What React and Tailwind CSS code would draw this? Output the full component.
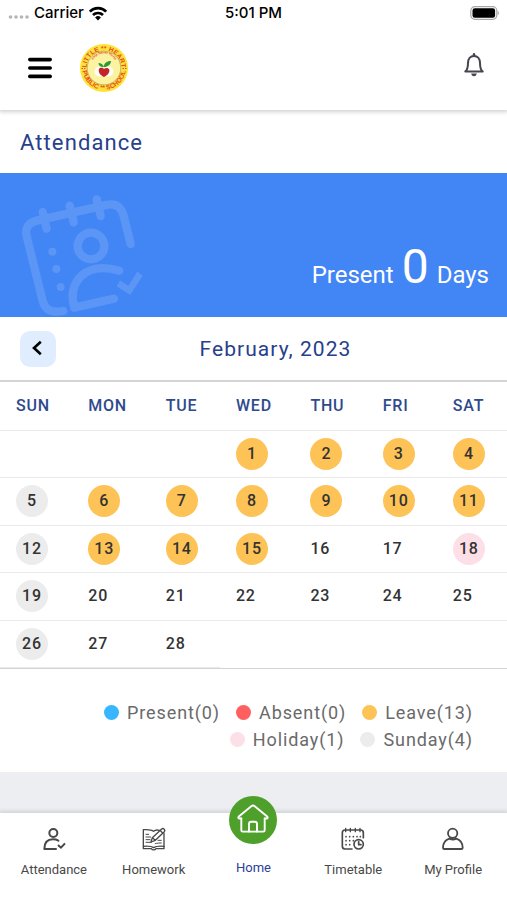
import React, { useState } from 'react';

const weekDays = ['SUN', 'MON', 'TUE', 'WED', 'THU', 'FRI', 'SAT'];

const weeks = [
  [null, null, null, 1, 2, 3, 4],
  [5, 6, 7, 8, 9, 10, 11],
  [12, 13, 14, 15, 16, 17, 18],
  [19, 20, 21, 22, 23, 24, 25],
  [26, 27, 28]
];

const leaveDays = [1, 2, 3, 4, 6, 7, 8, 9, 10, 11, 13, 14, 15];
const holidays = [18];

const legend = [
  { label: 'Present(0)', color: 'bg-[#38b6ff]' },
  { label: 'Absent(0)', color: 'bg-[#ff5f5f]' },
  { label: 'Leave(13)', color: 'bg-[#fec356]' },
  { label: 'Holiday(1)', color: 'bg-[#fddfe7]' },
  { label: 'Sunday(4)', color: 'bg-[#ececec]' }
];

const dayColor = (day, index) => {
  if (!day) return null;
  if (leaveDays.includes(day)) return 'bg-[#fec356]';
  if (holidays.includes(day)) return 'bg-[#fddfe7]';
  if (index === 0) return 'bg-[#ececec]';
  return null;
};

const StatusBar = () => (
  <div className="grid grid-cols-3 items-center h-[26px] px-2 text-[15px] font-medium text-black font-['Inter',sans-serif]">
    <div className="flex items-center gap-1">
      <svg className="w-[22px] h-3" viewBox="0 0 22 12" fill="#b5b5b5">
        <circle cx="2.500" cy="10" r="1.800" />
        <circle cx="8" cy="10" r="1.800" />
        <circle cx="13.500" cy="10" r="1.800" />
        <circle cx="19" cy="10" r="1.800" />
      </svg>
      <span>Carrier</span>
      <svg className="w-5 h-[15px]" viewBox="0 0 20 15" fill="none" stroke="#000" strokeWidth="2.700">
        <path d="M1.800 5.600a11.600 11.600 0 0 1 16.400 0" />
        <path d="M5 9a7.200 7.200 0 0 1 10 0" />
        <path d="M10 14.500 7.100 11.500a4.100 4.100 0 0 1 5.800 0z" fill="#000" stroke="none" />
      </svg>
    </div>
    <span className="text-center">5:01 PM</span>
    <svg className="w-[30px] h-[14px] justify-self-end" viewBox="0 0 30 14">
      <rect x="1.800" y="0.700" width="26" height="12.600" rx="4" fill="none" stroke="#a8a8a8" strokeWidth="1.200" />
      <rect x="3.500" y="2.300" width="22.600" height="9.400" rx="2.300" fill="#000" />
      <path d="M28.700 5v4c1.600-.7 1.600-3.300 0-4z" fill="#a8a8a8" />
    </svg>
  </div>
);

const SchoolLogo = () => (
  <svg className="w-12 h-12" viewBox="0 0 48 48" role="img" aria-label="Little Heart Public School">
    <defs>
      <path id="ringTop" d="M7.900 30.500a17.400 17.400 0 1 1 32.200 0" />
      <path id="ringBottom" d="M2.200 24a21.800 21.800 0 0 0 43.600 0" />
      <path id="ringInner" d="M11.500 22a12.500 12.500 0 0 1 25 0" />
    </defs>
    <circle cx="24" cy="24" r="24" fill="#fde335" />
    <circle cx="24" cy="24" r="16.800" fill="#fbf3a0" stroke="#a9a468" strokeWidth="0.700" />
    <g fill="#ea4a2c" fontFamily="Liberation Sans, sans-serif" fontWeight="bold" textAnchor="middle">
      <text fontSize="6.600"><textPath href="#ringTop" startOffset="50%">LITTLE ** HEART</textPath></text>
      <text fontSize="6.600"><textPath href="#ringBottom" startOffset="50%">PUBLIC ** SCHOOL</textPath></text>
      <text fontSize="3.300"><textPath href="#ringInner" startOffset="50%">Help Never Hurts</textPath></text>
    </g>
    <path d="M1.500 24.500h4M42.500 24.500h4" stroke="#ea4a2c" strokeWidth="1.200" strokeDasharray="1.500 1" />
    <circle cx="19.500" cy="27.500" r="5" fill="#fffef2" />
    <circle cx="28.500" cy="27.500" r="5" fill="#fffef2" />
    <path d="M24 33c-4-2-6-5-5-8 1.500-2 4-1 5 0 1.300-1.500 4.500-1.500 5.300.6.700 3-1.800 6-5.300 7.400z" fill="#c3242c" />
    <path d="M24 23c-1-2.500-3-4-5.500-4 0 2.700 2.500 4.400 5.500 4zM24 23c-.3-3.500 2.500-6 7-6-.2 3.500-3 6-7 6z" fill="#2a9a3c" />
  </svg>
);

const Header = () => (
  <header className="flex items-center justify-between h-[84px] pl-7 pr-5">
    <div className="flex items-center gap-7">
      <button type="button" aria-label="Menu">
        <svg className="w-6 h-6" viewBox="0 0 24 24" stroke="#000" strokeWidth="3.600" strokeLinecap="round">
          <path d="M1.800 3.600h20.400M1.800 12h20.400M1.800 20.400h20.400" />
        </svg>
      </button>
      <SchoolLogo />
    </div>
    <button type="button" aria-label="Notifications" className="pb-2">
      <svg className="w-[26px] h-[26px]" viewBox="0 0 26 26" fill="none" stroke="#454550" strokeWidth="2" strokeLinejoin="round">
        <path d="M4.300 20.600c2.400-2.200 2.700-4.600 2.700-8.700C7 7.800 9.400 4.900 13 4.900s6 2.900 6 7c0 4.100.3 6.500 2.700 8.700z" />
        <path d="M13 4.900V3.300" strokeLinecap="round" strokeWidth="2.400" />
        <path d="M10.200 22.600h5.600c-.2 1.600-1.200 2.600-2.800 2.600s-2.600-1-2.800-2.600z" fill="#454550" stroke="none" />
      </svg>
    </button>
  </header>
);

const Banner = () => (
  <section className="flex items-end justify-between pl-5 pr-[18px] pt-5 bg-[#4285f4] text-white">
    <svg className="w-[124px] h-[124px]" viewBox="60 219 372 372" fill="none">
      <g opacity="0.130" stroke="#fff" strokeWidth="25" strokeLinecap="round">
        <path d="M190 573c-38 7-55-6-62-30L81 353c-8-30 4-45 32-52l211-47c26-5 39 10 46 30l22 88" />
        <path d="M128 276l12 50M209 257l12 50M290 238l12 50" />
        <circle cx="273" cy="378" r="40" />
        <path d="M358 452c-54-16-96-6-121 23-23 28-23 57-14 88l119-27" strokeLinejoin="round" />
        <path d="M355 490l33 21 32-50" strokeWidth="20" strokeLinecap="butt" />
        <g fill="#fff" stroke="none">
          <circle cx="157" cy="395" r="12" />
          <circle cx="169" cy="447" r="12" />
          <circle cx="182" cy="501" r="12" />
        </g>
      </g>
    </svg>
    <p className="flex items-baseline gap-2 pb-[26px] text-2xl">
      <span>Present</span>
      <span className="text-5xl">0</span>
      <span>Days</span>
    </p>
  </section>
);

const Calendar = () => (
  <div className="bg-white border-t-2 border-b border-[#d3d3d8]">
    <table className="w-full h-[286px] text-left text-base font-medium tracking-wider">
      <thead>
        <tr className="text-[#2f4a8c]">
          {weekDays.map((day) => (
            <th key={day} className="h-12 px-4 font-medium border-b border-[#e9e9eb]">{day}</th>
          ))}
        </tr>
      </thead>
      <tbody className="text-[#333333]">
        {weeks.map((week, row) => (
          <tr key={row}>
            {week.map((day, index) => {
              const color = dayColor(day, index);
              return (
                <td key={index} className="px-4 border-b border-[#e9e9eb]">
                  {color ? (
                    <span className={`flex items-center justify-center w-8 h-8 rounded-full ${color}`}>{day}</span>
                  ) : day}
                </td>
              );
            })}
          </tr>
        ))}
      </tbody>
    </table>
  </div>
);

const AttendanceIcon = () => (
  <svg className="w-6 h-6" viewBox="126 141 72 72" fill="none" stroke="currentColor" strokeWidth="6" strokeLinecap="round" strokeLinejoin="round">
    <circle cx="160" cy="159" r="12" />
    <path d="M175 182c-5-3-10-4-16-4-17 0-26 11-26 29h35" />
    <path d="M174 195l9 8 12-13" strokeLinecap="butt" />
  </svg>
);

const HomeworkIcon = () => (
  <svg className="w-6 h-6" viewBox="426 141 72 72" fill="none" stroke="currentColor" strokeWidth="4" strokeLinecap="round" strokeLinejoin="round">
    <path d="M478 151c-7-2-13-1-17 3-7-6-17-6-31-5v50c13-1 24-1 31 4 7-5 18-5 31-4v-39" />
    <path d="M430 199v7h24c3 5 11 5 14 0h24v-7" />
    <path d="M438 163h8M438 171h14M438 179h12M438 187h16M466 191c6-2 12-2 18-2M474 181h10" strokeWidth="3" />
    <path d="M453 186l4-13 28-26c5-4 12 3 8 8l-27 26zM480 151l8 8M457 173l9 8" />
  </svg>
);

const TimetableIcon = () => (
  <svg className="w-6 h-6" viewBox="264 141 72 72" fill="none" stroke="currentColor" strokeWidth="5" strokeLinecap="round" strokeLinejoin="round">
    <path d="M297 207h-21c-5 0-8-3-8-8v-41c0-5 3-8 8-8h47c5 0 8 3 8 8v15" />
    <path d="M278 145v10M292 145v10M307 145v10M321 145v10" strokeWidth="4" />
    <path d="M279 170h.1M290 170h.1M301 170h.1M312 170h.1M322 170h.1M279 182h.1M290 182h.1M301 182h.1M279 194h.1M290 194h.1" />
    <circle cx="317" cy="193" r="14" />
    <path d="M317 185v9h7" />
  </svg>
);

const ProfileIcon = () => (
  <svg className="w-6 h-6" viewBox="563 141 72 72" fill="none" stroke="currentColor" strokeWidth="5.500" strokeLinecap="round" strokeLinejoin="round">
    <circle cx="598" cy="160" r="14" />
    <path d="M588 176c-12 4-19 15-19 27 0 3 2 4 4 4h51c2 0 4-1 4-4 0-12-7-23-19-27-6 3-15 3-21 0z" />
  </svg>
);

const HomeIcon = () => (
  <svg className="w-8 h-8" viewBox="0 0 32 32" fill="none" stroke="#fff" strokeWidth="1.900" strokeLinecap="round" strokeLinejoin="round">
    <path d="M4.300 14.500H2.600c-1.300 0-1.700-1-.8-1.900L14.300 2.200c1.100-.9 2.300-.9 3.400 0l12.500 10.400c.9.900.5 1.900-.8 1.900h-1.700" />
    <path d="M4.300 14.500v11.700c0 .9.500 1.400 1.400 1.400h20.600c.9 0 1.400-.5 1.400-1.400V14.500" />
    <path d="M12 27.500v-7.500c0-1.500.8-2.300 2.300-2.300h3.400c1.500 0 2.300.8 2.300 2.300v7.500" />
  </svg>
);

const NavItem = ({ label, children }) => (
  <a href="#" className="flex flex-1 flex-col items-center gap-[9px] pt-[14px]">
    {children}
    <span>{label}</span>
  </a>
);

const BottomNav = () => (
  <nav className="sticky bottom-0 flex h-[87px] px-1 bg-white text-[13px] leading-5 text-[#484848] shadow-[0_-1px_4px_1px_rgba(0,0,0,0.12)]">
    <NavItem label="Attendance"><AttendanceIcon /></NavItem>
    <NavItem label="Homework"><HomeworkIcon /></NavItem>
    <a href="#" className="flex flex-1 flex-col items-center gap-[14px] -mt-[17px] text-[#2b3f97]">
      <span className="flex items-center justify-center w-12 h-12 rounded-full bg-[#4fa02b]">
        <HomeIcon />
      </span>
      <span>Home</span>
    </a>
    <NavItem label="Timetable"><TimetableIcon /></NavItem>
    <NavItem label="My Profile"><ProfileIcon /></NavItem>
  </nav>
);

const App = () => {
  const [month] = useState('February, 2023');

  return (
    <div className="flex flex-col min-h-screen bg-[#eceef2] font-['Roboto',sans-serif]">
      <div className="relative z-10 bg-white shadow-[0_1px_4px_1px_rgba(0,0,0,0.18)]">
        <StatusBar />
        <Header />
      </div>

      <main className="flex-1">
        <h1 className="px-5 pt-[19px] pb-4 bg-white text-[22px] leading-7 tracking-wider text-[#27408b]">Attendance</h1>
        <Banner />

        {/* Month switcher */}
        <div className="flex items-center pl-5 pr-3 pt-[14px] pb-[13px] bg-white">
          <button type="button" aria-label="Previous month" className="flex items-center justify-center w-9 h-9 rounded-[10px] bg-[#e0edff]">
            <svg className="w-5 h-5" viewBox="0 0 20 20" fill="none" stroke="#000" strokeWidth="2.600">
              <path d="M12.800 2.800 6 9l6.800 6.200" />
            </svg>
          </button>
          <h2 className="flex-1 text-center text-[21px] leading-7 tracking-wider text-[#27408b]">{month}</h2>
        </div>

        <Calendar />

        {/* Legend */}
        <ul className="flex flex-wrap justify-end gap-x-4 pl-5 pr-[34px] pt-[30px] pb-[19px] bg-white text-lg leading-[27px] tracking-wider text-[#6a6a6a]">
          {legend.map((item) => (
            <li key={item.label} className="flex items-center gap-2">
              <span className={`w-[15px] h-[15px] rounded-full ${item.color}`}></span>
              {item.label}
            </li>
          ))}
        </ul>
      </main>

      <BottomNav />
    </div>
  );
};

export default App;
